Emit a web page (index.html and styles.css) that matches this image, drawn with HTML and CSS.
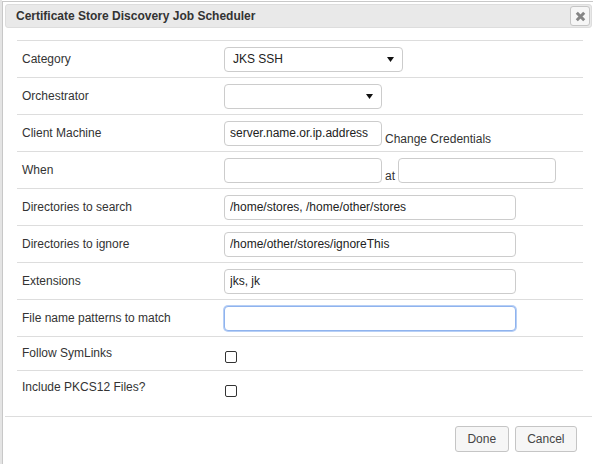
FILE: index.html
```html
<!DOCTYPE html>
<html>
<head>
<meta charset="utf-8">
<link rel="stylesheet" href="styles.css">
</head>
<body>
<div class="page">
  <div class="dialog">
    <div class="titlebar">
      <span class="title">Certificate Store Discovery Job Scheduler</span>
      <button class="close" title="Close">
        <svg width="11" height="11" viewBox="0 0 11 11"><path d="M1.8 1.8 L9.2 9.2 M9.2 1.8 L1.8 9.2" stroke="#858585" stroke-width="3" stroke-linecap="butt"/></svg>
      </button>
    </div>
    <div class="content">
      <div class="form">
        <div class="row">
          <label class="lbl">Category</label>
          <div class="field">
            <div class="select w179"><span>JKS SSH</span><svg width="7" height="5" viewBox="0 0 7 5"><path d="M0 0 H7 L3.5 5 Z" fill="#111"/></svg></div>
          </div>
        </div>
        <div class="row">
          <label class="lbl">Orchestrator</label>
          <div class="field">
            <div class="select w158"><span></span><svg width="7" height="5" viewBox="0 0 7 5"><path d="M0 0 H7 L3.5 5 Z" fill="#111"/></svg></div>
          </div>
        </div>
        <div class="row">
          <label class="lbl">Client Machine</label>
          <div class="field">
            <input class="inp w158" type="text" value="server.name.or.ip.address">
            <span class="aside">Change Credentials</span>
          </div>
        </div>
        <div class="row">
          <label class="lbl">When</label>
          <div class="field">
            <input class="inp w158" type="text" value="">
            <span class="aside at">at</span>
            <input class="inp w158" type="text" value="">
          </div>
        </div>
        <div class="row">
          <label class="lbl">Directories to search</label>
          <div class="field"><input class="inp w292" type="text" value="/home/stores, /home/other/stores"></div>
        </div>
        <div class="row">
          <label class="lbl">Directories to ignore</label>
          <div class="field"><input class="inp w292" type="text" value="/home/other/stores/ignoreThis"></div>
        </div>
        <div class="row">
          <label class="lbl">Extensions</label>
          <div class="field"><input class="inp w292" type="text" value="jks, jk"></div>
        </div>
        <div class="row">
          <label class="lbl">File name patterns to match</label>
          <div class="field"><input class="inp w292 focused" type="text" value=""></div>
        </div>
        <div class="row check">
          <label class="lbl">Follow SymLinks</label>
          <div class="field"><input class="cb" type="checkbox"></div>
        </div>
        <div class="row check">
          <label class="lbl">Include PKCS12 Files?</label>
          <div class="field"><input class="cb" type="checkbox"></div>
        </div>
      </div>
    </div>
    <div class="buttonpane">
      <button class="btn">Done</button>
      <button class="btn">Cancel</button>
    </div>
  </div>
</div>
</body>
</html>
```
FILE: styles.css
```css
html, body {
  margin: 0;
  padding: 0;
  background: #ffffff;
  overflow: hidden;
  font-family: "Liberation Sans", Arial, sans-serif;
  font-size: 12px;
  color: #333333;
}

.page {
  display: flex;
  align-items: flex-start;
  padding-top: 1px;
  border-left: 2px solid #e4e4e4;
  height: 464px;
  box-sizing: border-box;
}

.dialog {
  flex: none;
  width: 593px;
  height: 470px;
  box-sizing: border-box;
  border: 1px solid #c8c8c8;
  background: #ffffff;
  padding: 2px;
  display: flex;
  flex-direction: column;
}

.titlebar {
  height: 24px;
  box-sizing: border-box;
  border: 1px solid #dddddd;
  background: #e9e9e9;
  border-radius: 3px;
  display: flex;
  align-items: center;
  justify-content: space-between;
  padding: 0 1px 0 10px;
}

.title {
  font-weight: bold;
  font-size: 12px;
  color: #333333;
  line-height: 16px;
}

.close {
  width: 20px;
  height: 20px;
  box-sizing: border-box;
  border: 1px solid #c5c5c5;
  background: #f6f6f6;
  border-radius: 3px;
  padding: 0;
  display: flex;
  align-items: center;
  justify-content: center;
}

.content {
  padding: 12px 9px 12px 12px;
}

.form {
  display: flex;
  flex-direction: column;
}

.row {
  height: 37px;
  box-sizing: border-box;
  border-top: 1px solid #dddddd;
  display: grid;
  grid-template-columns: 207px 1fr;
  align-items: center;
}

.row.check {
  height: 34px;
  align-items: start;
}

.lbl {
  padding-left: 5px;
  line-height: 14px;
  color: #333333;
}

.row.check .lbl {
  padding-top: 9px;
}

.field {
  display: flex;
  align-items: center;
}

.inp, .select {
  height: 25px;
  box-sizing: border-box;
  border: 1px solid #cccccc;
  border-radius: 4px;
  background: #ffffff;
  font-family: "Liberation Sans", Arial, sans-serif;
  font-size: 12px;
  color: #222222;
  padding: 0 5px;
  margin: 0;
  outline: none;
}

.focused {
  border-color: #8fb3ee;
  box-shadow: 0 0 0 1px #b7cff5;
}

.select {
  display: flex;
  align-items: center;
  justify-content: space-between;
  padding: 0 8px 0 8px;
}

.w158 { width: 158px; }
.w179 { width: 179px; }
.w292 { width: 292px; }

.aside {
  align-self: flex-end;
  line-height: 14px;
  margin-left: 3px;
  color: #333333;
}

.at {
  margin-right: 3px;
}

.cb {
  appearance: none;
  -webkit-appearance: none;
  width: 12px;
  height: 12px;
  box-sizing: border-box;
  border: 1px solid #333333;
  border-radius: 2px;
  background: #ffffff;
  margin: 14px 0 0 1px;
}

.buttonpane {
  border-top: 1px solid #dddddd;
  display: flex;
  justify-content: flex-end;
  gap: 6px;
  padding: 9px 15px 0 0;
}

.btn {
  height: 26px;
  box-sizing: border-box;
  border: 1px solid #c5c5c5;
  background: #f6f6f6;
  border-radius: 3px;
  padding: 0 11.5px;
  font-family: "Liberation Sans", Arial, sans-serif;
  font-size: 12px;
  color: #454545;
}
```
